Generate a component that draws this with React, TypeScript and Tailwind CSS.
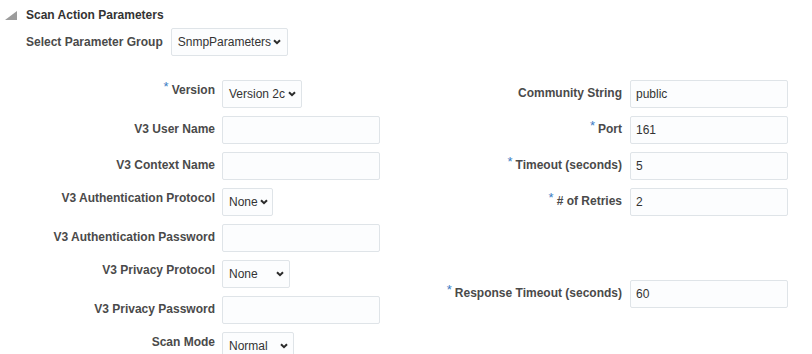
import React from "react"

type Field = {
    label: string,
    required?: boolean,
    kind: 'input' | 'select',
    value?: string,
    width?: string,
    pr?: string,
}

const leftFields: Field[] = [
    { label: 'Version', required: true, kind: 'select', value: 'Version 2c', width: 'w-[80px]', pr: 'pr-[5px]' },
    { label: 'V3 User Name', kind: 'input' },
    { label: 'V3 Context Name', kind: 'input' },
    { label: 'V3 Authentication Protocol', kind: 'select', value: 'None', width: 'w-[51px]', pr: 'pr-[4px]' },
    { label: 'V3 Authentication Password', kind: 'input' },
    { label: 'V3 Privacy Protocol', kind: 'select', value: 'None', width: 'w-[68px]', pr: 'pr-[5px]' },
    { label: 'V3 Privacy Password', kind: 'input' },
    { label: 'Scan Mode', kind: 'select', value: 'Normal', width: 'w-[72px]', pr: 'pr-[5px]' },
]

const rightFields: Field[] = [
    { label: 'Community String', kind: 'input', value: 'public' },
    { label: 'Port', required: true, kind: 'input', value: '161' },
    { label: 'Timeout (seconds)', required: true, kind: 'input', value: '5' },
    { label: '# of Retries', required: true, kind: 'input', value: '2' },
]

function Chevron() {
    return (
        <svg width="8" height="6" viewBox="0 0 8 6" className="shrink-0">
            <path d="M1 1.2l3 3 3-3" fill="none" stroke="#2b2b2b" strokeWidth="2" />
        </svg>
    )
}

function SelectBox({ value, width, pr }: { value?: string, width?: string, pr?: string }) {
    return (
        <div className={`${width} ${pr} h-[28px] pl-[6px] flex items-center justify-between border border-[#dfe4e8] bg-[#fcfdfe] rounded-[2px] text-[#333] font-normal leading-[16px]`}>
            <span className="whitespace-nowrap">{value}</span>
            <Chevron />
        </div>
    )
}

function TextBox({ value }: { value?: string }) {
    return (
        <div className="w-[158px] h-[28px] px-[5px] flex items-center border border-[#dfe4e8] bg-[#fcfdfe] rounded-[2px] text-[#333] font-normal leading-[16px]">
            {value}
        </div>
    )
}

function Row({ field, labelWidth, gap }: { field: Field, labelWidth: string, gap: string }) {
    const pt = field.kind === 'select' ? 'pt-[2px]' : 'pt-[5px]'
    return (
        <div className={`flex h-[28px] ${gap}`}>
            <div className={`${labelWidth} ${pt} text-right font-bold text-[#4a4a4a] leading-[16px] whitespace-nowrap`}>
                {field.required && (
                    <span className="text-[#3b7cc4] text-[13px] font-normal leading-[0] align-[3px] mr-[3px]">*</span>
                )}
                {field.label}
            </div>
            {field.kind === 'select'
                ? <SelectBox value={field.value} width={field.width} pr={field.pr} />
                : <TextBox value={field.value} />}
        </div>
    )
}

export default function App() {
    return (
        <div className="w-[812px] h-[354px] bg-white overflow-hidden text-[12px] font-['Liberation_Sans',Arial,sans-serif]">
            {/* section header */}
            <div className="flex items-center gap-[9px] pl-[5px] pt-[7px] leading-[16px]">
                <svg width="12" height="9" viewBox="0 0 12 9">
                    <polygon points="12,0 12,9 0,9" fill="#9c9c9c" />
                </svg>
                <span className="font-bold text-[#333]">Scan Action Parameters</span>
            </div>

            {/* parameter group */}
            <div className="flex items-center gap-[8px] pl-[26px] mt-[5px] leading-[16px]">
                <span className="font-bold text-[#4a4a4a]">Select Parameter Group</span>
                <SelectBox value="SnmpParameters" width="w-[117px]" pr="pr-[6px]" />
            </div>

            <div className="flex mt-[24px]">
                <div className="flex flex-col gap-[8px]">
                    {leftFields.map(f => (
                        <Row key={f.label} field={f} labelWidth="w-[215px]" gap="gap-[7px]" />
                    ))}
                </div>
                <div className="flex flex-col gap-[8px]">
                    {rightFields.map(f => (
                        <Row key={f.label} field={f} labelWidth="w-[242px]" gap="gap-[8px]" />
                    ))}
                    <div className="mt-[56px]">
                        <Row
                            field={{ label: 'Response Timeout (seconds)', required: true, kind: 'input', value: '60' }}
                            labelWidth="w-[242px]"
                            gap="gap-[8px]"
                        />
                    </div>
                </div>
            </div>
        </div>
    )
}
